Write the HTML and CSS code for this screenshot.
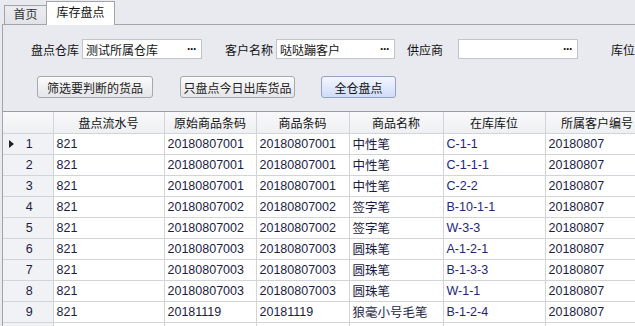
FILE: index.html
```html
<!DOCTYPE html>
<html lang="zh-CN">
<head>
  <meta charset="UTF-8" />
  <title>库存盘点</title>
  <link rel="stylesheet" href="styles.css">
</head>
<body>
  <!-- Вкладки -->
  <div class="tabs">
    <div class="tab">首页</div>
    <div class="tab active">库存盘点</div>
  </div>

  <div class="panel">
    <div class="filters">
      <div class="field">
        <span class="label">盘点仓库</span>
        <div class="picker"><span>测试所属仓库</span><span class="dots">···</span></div>
      </div>
      <div class="field">
        <span class="label">客户名称</span>
        <div class="picker short"><span>哒哒蹦客户</span><span class="dots">···</span></div>
      </div>
      <div class="field">
        <span class="label">供应商</span>
        <div class="picker"><span></span><span class="dots">···</span></div>
      </div>
      <div class="field">
        <span class="label">库位</span>
      </div>
    </div>

    <div class="actions">
      <button class="btn">筛选要判断的货品</button>
      <button class="btn">只盘点今日出库货品</button>
      <button class="btn primary">全仓盘点</button>
    </div>

    <!-- Таблица -->
    <div class="grid-wrap">
      <table class="grid">
        <colgroup>
          <col class="c-idx"><col class="c1"><col class="c2"><col class="c3"><col class="c4"><col class="c5"><col class="c6"><col class="c7">
        </colgroup>
        <thead>
          <tr><th></th><th>盘点流水号</th><th>原始商品条码</th><th>商品条码</th><th>商品名称</th><th>在库库位</th><th>所属客户编号</th><th></th></tr>
        </thead>
        <tbody>
          <tr><td class="idx current">1</td><td>821</td><td>20180807001</td><td>20180807001</td><td>中性笔</td><td class="loc">C-1-1</td><td>20180807</td><td></td></tr>
          <tr><td class="idx">2</td><td>821</td><td>20180807001</td><td>20180807001</td><td>中性笔</td><td class="loc">C-1-1-1</td><td>20180807</td><td></td></tr>
          <tr><td class="idx">3</td><td>821</td><td>20180807001</td><td>20180807001</td><td>中性笔</td><td class="loc">C-2-2</td><td>20180807</td><td></td></tr>
          <tr><td class="idx">4</td><td>821</td><td>20180807002</td><td>20180807002</td><td>签字笔</td><td class="loc">B-10-1-1</td><td>20180807</td><td></td></tr>
          <tr><td class="idx">5</td><td>821</td><td>20180807002</td><td>20180807002</td><td>签字笔</td><td class="loc">W-3-3</td><td>20180807</td><td></td></tr>
          <tr><td class="idx">6</td><td>821</td><td>20180807003</td><td>20180807003</td><td>圆珠笔</td><td class="loc">A-1-2-1</td><td>20180807</td><td></td></tr>
          <tr><td class="idx">7</td><td>821</td><td>20180807003</td><td>20180807003</td><td>圆珠笔</td><td class="loc">B-1-3-3</td><td>20180807</td><td></td></tr>
          <tr><td class="idx">8</td><td>821</td><td>20180807003</td><td>20180807003</td><td>圆珠笔</td><td class="loc">W-1-1</td><td>20180807</td><td></td></tr>
          <tr><td class="idx">9</td><td>821</td><td>20181119</td><td>20181119</td><td>狼毫小号毛笔</td><td class="loc">B-1-2-4</td><td>20180807</td><td></td></tr>
          <tr><td class="idx"></td><td></td><td></td><td></td><td></td><td></td><td></td><td></td></tr>
        </tbody>
      </table>
    </div>
  </div>
</body>
</html>
```

FILE: styles.css
```css
* { box-sizing: border-box; margin: 0; padding: 0; }
html, body {
  width: 635px; height: 326px; overflow: hidden;
  background: #e9eaef; color: #1c1c44;
  font-family: 'Liberation Sans', 'Noto Sans CJK SC', sans-serif; font-size: 12.5px;
}

/* Вкладки */
.tabs { display: flex; align-items: flex-end; height: 25px; padding-left: 4px; }
.tab {
  height: 19px; width: 42px; line-height: 18px; text-align: center;
  border: 1px solid #a3a3a8; border-bottom: none; border-right: none;
  background: linear-gradient(#ececf0, #e2e3e8); color: #333;
  font-size: 12px; margin-bottom: 1px;
}
.tab.active {
  height: 24px; width: 69px; line-height: 22px; border-right: 1px solid #a3a3a8;
  background: #fff; color: #111; margin-bottom: 0; position: relative; z-index: 1;
}

/* Панель */
.panel {
  margin-left: 2px; margin-top: -1px; height: 302px; overflow: hidden;
  border-top: 1px solid #a3a3a8; border-left: 1px solid #a3a3a8;
}

.filters {
  display: grid; grid-template-columns: 194px 182px 204px 1fr;
  padding: 14px 0 0 28px; font-size: 12px;
}
.field { display: flex; align-items: center; height: 20px; white-space: nowrap; }
.label { width: 51px; color: #111; }
.picker {
  display: flex; justify-content: space-between; align-items: center;
  width: 120px; height: 20px; padding: 0 5px 0 3px;
  background: #fff; border: 1px solid #c3c4ca; color: #111;
}
.picker.short { width: 119px; }
.dots { font-weight: bold; letter-spacing: -1px; font-size: 12px; }

.actions { display: flex; gap: 27px; padding: 17px 0 0 34px; }
.btn {
  height: 22px; padding: 0; font: inherit; font-size: 12px; color: #222; white-space: nowrap;
  background: linear-gradient(#fbfbfc, #e4e5e9); border: 1px solid #a7a8ae; border-radius: 3px;
}
.btn:nth-child(1) { width: 116px; }
.btn:nth-child(2) { width: 115px; }
.btn.primary {
  width: 75px; margin-left: -1px; color: #111;
  background: linear-gradient(#f3f6ff, #cfdcf8); border-color: #95a1c0;
}

/* Таблица */
.grid-wrap { margin-top: 13px; border-top: 1px solid #9b9ca3; }
.grid { border-collapse: collapse; table-layout: fixed; width: 746px; }
.c-idx { width: 50px; } .c1 { width: 111px; } .c2 { width: 92px; } .c3 { width: 93px; }
.c4 { width: 94px; } .c5 { width: 102px; } .c6 { width: 104px; } .c7 { width: 100px; }
.grid th, .grid td {
  height: 21px; border: 1px solid #d3d4da; white-space: nowrap; overflow: hidden;
  font-weight: normal; padding: 0 3px; text-align: left;
}
.grid tr > :first-child { border-left: none; }
.grid thead tr th { border-top: none; }
.grid th { background: linear-gradient(#f9f9fb, #eeeff2); text-align: center; color: #111; font-size: 12px; }
.grid td.idx { background: #f1f2f5; text-align: center; position: relative; padding-left: 6px; }
.grid td.current::before {
  content: ''; position: absolute; left: 6px; top: 6px;
  border: 4px solid transparent; border-left: 5px solid #222; border-right: none;
}
.grid td { background: #fff; }
.grid td.loc { color: #24247a; }
```
